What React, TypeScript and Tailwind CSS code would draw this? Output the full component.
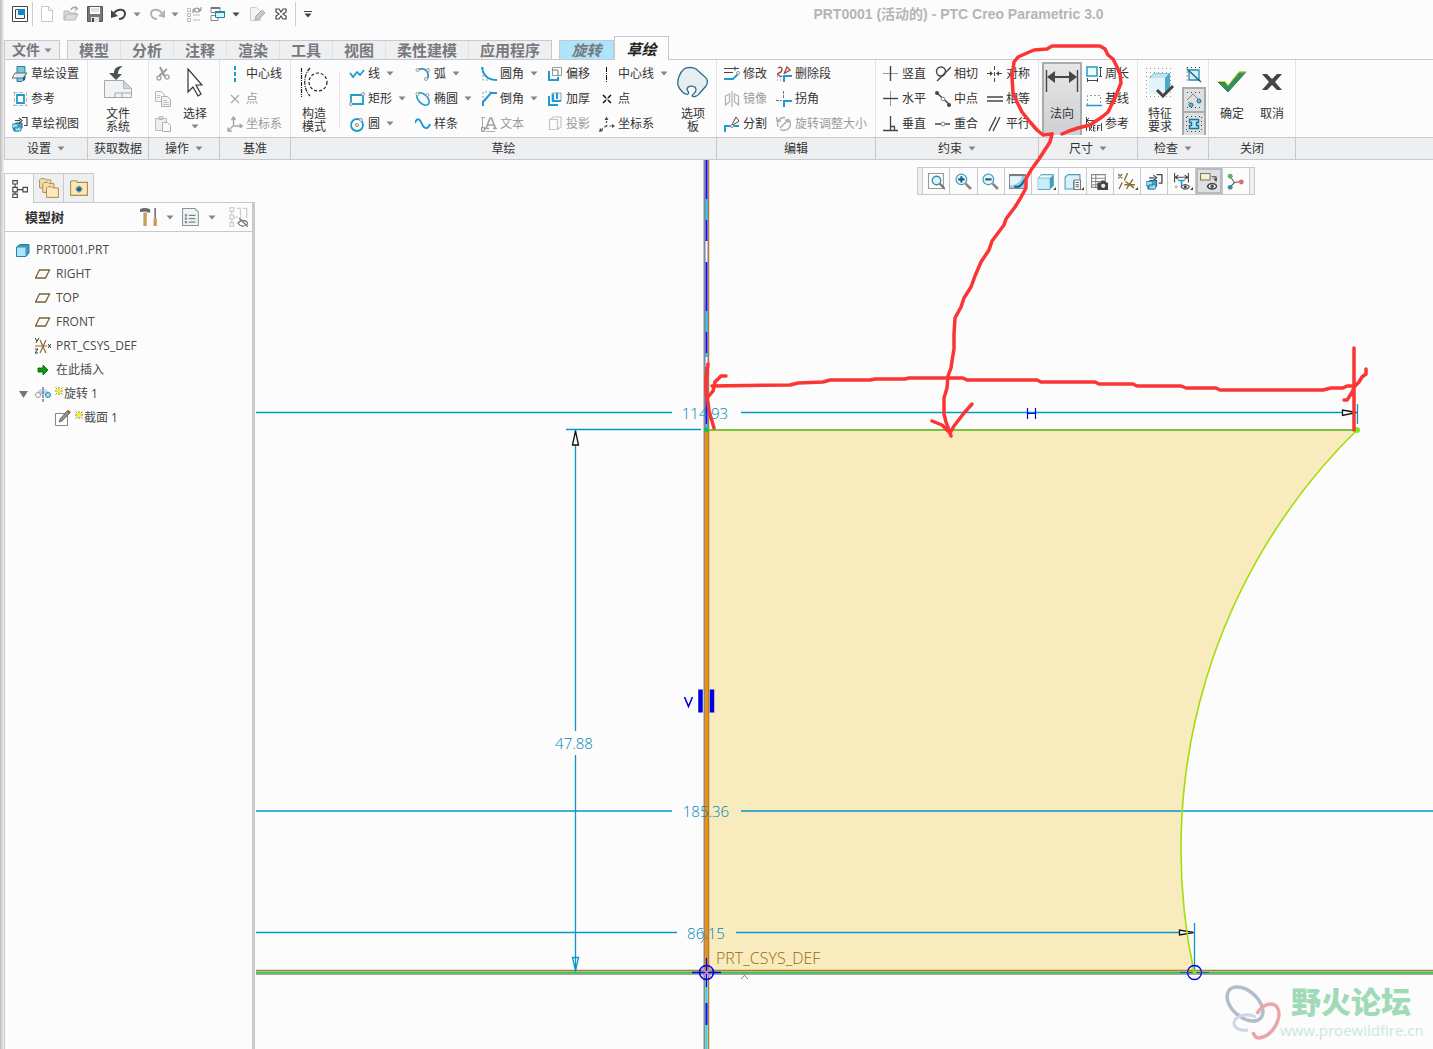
import type { ReactNode } from "react";
import clsx from "clsx";

const DK = "#454545";
const BL = "#1e9bd0";
const GR = "#b4b4b4";

const icons: Record<string, ReactNode> = {
  newFile: <path d="M2.500 .5h7l4 4v11h-11zM9.500 .5v4h4" fill="#fff" stroke="#c8c8c8" />,
  open: (
    <>
      <path d="M1 14V5h5l1 2h6v2M1 14l3-6h11l-3 6z" fill="#ddd" stroke="#b5b5b5" />
      <path d="M8 4c1-3 3-3 5-2M12 .5l2.500 2-2.500 2" fill="none" stroke="#aaa" strokeWidth="1.500" />
    </>
  ),
  save: (
    <>
      <path d="M.5 .5h15v15H.5z" fill="#77787a" stroke="#55575a" />
      <path d="M3 1h10v7H3z" fill="#fff" />
      <path d="M4 3h8M4 5h8" stroke="#c4c4c4" />
      <path d="M4 11h8v5H4z" fill="#d4e4ec" />
      <path d="M5 12h2v4H5z" fill="#444" />
    </>
  ),
  undo: (
    <>
      <path d="M3 7c4-5 11-4 11 1 0 3-3 5-6 5" fill="none" stroke={DK} strokeWidth="2" />
      <path d="M0 4v8l7-2z" fill={DK} />
    </>
  ),
  redo: (
    <>
      <path d="M13 7C9 2 2 3 2 8c0 3 3 5 6 5" fill="none" stroke={GR} strokeWidth="2" />
      <path d="M16 4v8l-7-2z" fill={GR} />
    </>
  ),
  regen: (
    <>
      <path d="M1.500 2.500h3v3h-3zM1.500 7.500h3v3h-3zM1.500 12.500h3v3h-3zM7 9h7M7 14h7" fill="none" stroke="#bbb" />
      <path d="M7 5c0-3 5-4 7-1M15 2c0 4-4 5-7 3M12 4h3V1M7 7V4h3" fill="none" stroke="#999" strokeWidth="1.200" />
    </>
  ),
  windows: (
    <>
      <path d="M1 1.500h9v5H1zM1 9.500h7v5H1z" fill="#fff" stroke="#888" />
      <path d="M1 2h9" stroke="#777" strokeWidth="2" />
      <path d="M5.500 5.500h9v6h-9z" fill="#d8f2fb" stroke="#2186a8" />
      <path d="M5 6h10" stroke="#2186a8" strokeWidth="2" />
    </>
  ),
  erase: (
    <>
      <path d="M1.500 1.500h6l4 4v9h-10z" fill="#f4f4f4" stroke="#ccc" />
      <path d="M7 10l6-6 3 3-6 6-4 1z" fill="#c9c9c9" stroke="#aaa" />
    </>
  ),
  closeWin: <path d="M3 3h3l2 3 2-3h3v3l-3 2 3 2v3h-3l-2-3-2 3H3v-3l3-2-3-2z" fill="#fff" stroke={DK} strokeWidth="1.200" />,
  sketchSetup: (
    <>
      <path d="M5 .5h8v12l-3 3H5z" fill="#7ec6e0" stroke="#2d7f9e" />
      <path d="M3 7h12l-4 5H0z" fill="#e8f6fb" fillOpacity=".85" stroke="#666" />
      <path d="M11 12l2-2v4l-2 1z" fill="#126080" />
    </>
  ),
  refs: (
    <>
      <path d="M5 4h7v8H5z" fill="none" stroke={BL} strokeWidth="1.800" />
      <path d="M2.500 1v14M1 14.500h14M1 1.500h12M14.500 1v13" stroke="#b5b5b5" strokeDasharray="4 2" />
    </>
  ),
  sketchView: (
    <>
      <path d="M1 9l3-2h6v5l-3 3H2z" fill="#42a4cc" stroke="#1c6d8d" />
      <path d="M0 8h6v4H0zM3 11h6v4H3z" fill="#9ddcf0" stroke="#2580a1" strokeWidth=".7" />
      <path d="M3 4.500h5M7 2l3 2.500L7 7M10 1.500h5v8h-3" fill="none" stroke={DK} strokeWidth="1.200" />
    </>
  ),
  cut: (
    <>
      <path d="M5 1l5 10M12 3L4 10" stroke="#999" strokeWidth="2" />
      <circle cx="4" cy="12" r="2" fill="none" stroke="#aaa" strokeWidth="1.500" />
      <circle cx="12" cy="11" r="2" fill="none" stroke="#aaa" strokeWidth="1.500" />
    </>
  ),
  copy: (
    <>
      <path d="M.5 .5h6l3 3v7h-9z" fill="#f5f5f5" stroke="#b9b9b9" />
      <path d="M6.500 5.500h6l3 3v7h-9z" fill="#f5f5f5" stroke="#b0b0b0" />
      <path d="M8 9.500h4M8 11.500h6M8 13.500h6M2 4.500h3M2 6.500h3" stroke="#c2c2c2" />
    </>
  ),
  paste: (
    <>
      <path d="M.5 2.500h11v12H.5zM4 .5h4v3H4z" fill="#eee" stroke="#bbb" />
      <path d="M7.500 6.500h5l3 3v6h-8z" fill="#f8f8f8" stroke="#b0b0b0" />
    </>
  ),
  centerBlue: <path d="M8 0v16" stroke={BL} strokeWidth="2" strokeDasharray="4 2" />,
  center: <path d="M7.500 1v15" stroke="#111" strokeDasharray="5 1 1 1" />,
  pointGray: <path d="M4 4l8 8M12 4l-8 8" stroke="#aaa" strokeWidth="1.200" />,
  point: (
    <>
      <path d="M4 4l3 3M12 4L9 7M4 12l3-3M12 12L9 9" stroke="#111" strokeWidth="1.500" />
      <path d="M7 7h2v2H7z" fill="#aaa" />
    </>
  ),
  csysGray: <path d="M6.500 1v9h9M6 10l-5 5M4.500 4l2-3 2 3M12.500 8l3 2-3 2M1 11.500V15h4" fill="none" stroke="#a6a6a6" strokeWidth="1.400" />,
  csys: (
    <>
      <path d="M7.500 1v9h7M7 10l-6 5" fill="none" stroke={DK} strokeWidth="1.200" strokeDasharray="2 2" />
      <path d="M5.500 4l2-3 2 3zM13 8l3 2-3 2zM0 16l1-4 3 3z" fill={DK} />
    </>
  ),
  line: <path d="M1 7l3 4 4-5 3 3 4-5" fill="none" stroke={BL} strokeWidth="1.800" />,
  rect: (
    <>
      <path d="M2 4h12v9H2z" fill="none" stroke={BL} strokeWidth="1.800" />
      <circle cx="14" cy="3" r="1.500" fill="#fff" stroke="#999" />
      <circle cx="2" cy="13" r="1.500" fill="#fff" stroke="#999" />
    </>
  ),
  circle: (
    <>
      <circle cx="8" cy="9" r="6" fill="none" stroke={BL} strokeWidth="1.800" />
      <circle cx="8" cy="9" r="1.500" fill="#fff" stroke="#888" />
      <circle cx="12" cy="4" r="1.500" fill="#fff" stroke="#999" />
    </>
  ),
  arc: (
    <>
      <path d="M2 4c8-3 12 1 11 8" fill="none" stroke={BL} strokeWidth="1.800" />
      <circle cx="2.500" cy="4" r="1.500" fill="#fff" stroke="#999" />
      <circle cx="13" cy="4" r="1.500" fill="#fff" stroke="#999" />
      <circle cx="11" cy="13" r="1.500" fill="#fff" stroke="#999" />
    </>
  ),
  ellipse: (
    <>
      <ellipse cx="8" cy="8" rx="7.500" ry="4.500" transform="rotate(45 8 8)" fill="none" stroke={BL} strokeWidth="1.600" />
      <circle cx="2.500" cy="3" r="1.500" fill="#fff" stroke="#999" />
      <circle cx="12.500" cy="4" r="1.500" fill="#fff" stroke="#999" />
    </>
  ),
  spline: <path d="M0 7c2-6 5-4 7 1s6 6 8 0" fill="none" stroke={BL} strokeWidth="2" />,
  fillet: (
    <>
      <path d="M2 1v13h7" fill="none" stroke="#999" strokeDasharray="2 2" />
      <path d="M1 1c1 9 6 13 15 13" fill="none" stroke={BL} strokeWidth="2" />
    </>
  ),
  chamfer: (
    <>
      <path d="M2 11V1h9" fill="none" stroke="#999" strokeDasharray="2 2" />
      <path d="M2 15v-4l8-9h6" fill="none" stroke={BL} strokeWidth="2" />
    </>
  ),
  textIcon: (
    <>
      <path d="M1.500 1v10M5 15.500h9M0 1.500h4" stroke="#aaa" />
      <path d="M5 12.500L9 2h1.500l4 10.500M6.500 9h6M4 12.500h4M12 12.500h4" fill="none" stroke="#a2a2a2" strokeWidth="1.700" />
      <path d="M.5 11.500h3v4h-3z" fill="#ddd" stroke="#999" />
    </>
  ),
  offset: (
    <>
      <path d="M5.500 1.500h9v8h-9z" fill="#fff" stroke="#999" />
      <path d="M2 5v9h9v-3" fill="none" stroke={BL} strokeWidth="2" />
      <path d="M5 4h6v6" fill="none" stroke="#777" />
    </>
  ),
  thicken: (
    <>
      <path d="M5 2h9v8H5z" fill="#e9f7fc" stroke="#8aa" />
      <path d="M2 5v9h9M6 3v7h8M10 2v6" fill="none" stroke={BL} strokeWidth="2" />
    </>
  ),
  project: <path d="M2.500 3.500h8v10h-8zM4 3l2-2h8v10l-3 2" fill="none" stroke="#c4c4c4" strokeWidth="1.200" />,
  modify: (
    <>
      <path d="M0 2.500h15M11 .5v4M0 6.500h9" stroke={DK} />
      <path d="M0 13h9l5-5" fill="none" stroke={BL} strokeWidth="1.800" />
      <circle cx="14" cy="7" r="1.500" fill="#fff" stroke="#999" />
    </>
  ),
  mirror: <path d="M8 0v16M1.500 5l4-2v8l-4 3zM14.500 5l-4-2v8l4 3z" fill="none" stroke="#b4b4b4" strokeWidth="1.300" />,
  divide: (
    <>
      <path d="M1 16v-6h6M10 10h5" fill="none" stroke={BL} strokeWidth="2" />
      <path d="M8 9l4-8 3 4-6 4" fill="none" stroke={DK} />
      <circle cx="8" cy="10" r="1.500" fill="#fff" stroke="#888" />
    </>
  ),
  deleteSeg: (
    <>
      <path d="M2 2c5-3 5 4 1 5s2 4 3 3M8 8l3-7 3 3-5 3" fill="none" stroke="#9c4b45" strokeWidth="1.400" />
      <path d="M8 16v-6h8" fill="none" stroke={BL} strokeWidth="2" />
      <path d="M1 11h5M1 14h4" stroke="#777" strokeDasharray="1 2" />
    </>
  ),
  corner: (
    <>
      <path d="M0 9.500h6M7.500 0v8" stroke="#777" strokeDasharray="3 1" />
      <path d="M8 16v-6h8" fill="none" stroke={BL} strokeWidth="2" />
    </>
  ),
  rotateSize: (
    <>
      <circle cx="8" cy="8" r="6.500" fill="none" stroke="#aaa" strokeDasharray="14 3" strokeWidth="1.400" />
      <path d="M4 12l8-8M9 4h3v3M1 1v4h4" fill="none" stroke="#aaa" strokeWidth="1.400" />
    </>
  ),
  vertical: (
    <>
      <path d="M0 7.500h15" stroke="#999" />
      <path d="M7.500 0v15" stroke={DK} strokeWidth="1.400" />
    </>
  ),
  horizontal: (
    <>
      <path d="M7.500 0v15" stroke="#999" />
      <path d="M0 7.500h15" stroke={DK} strokeWidth="1.400" />
    </>
  ),
  perp: <path d="M0 14.500h15M7.500 0v14M8 10.500h3.500V14" fill="none" stroke={DK} strokeWidth="1.300" />,
  tangent: (
    <>
      <circle cx="6" cy="5.500" r="4.500" fill="none" stroke={DK} strokeWidth="1.400" />
      <path d="M2 15L16 1" stroke={DK} strokeWidth="1.400" />
    </>
  ),
  midpoint: (
    <>
      <path d="M2 2l13 12" stroke={DK} strokeWidth="1.500" />
      <circle cx="2" cy="2" r="2" fill={DK} />
      <circle cx="14" cy="14" r="2" fill={DK} />
      <circle cx="8" cy="8" r="1.800" fill="#fff" stroke="#888" />
    </>
  ),
  coincident: (
    <>
      <path d="M0 8h15" stroke={DK} strokeWidth="1.500" />
      <circle cx="8" cy="8" r="2" fill="#fff" stroke="#888" />
    </>
  ),
  symmetric: (
    <>
      <path d="M7.500 0v16" stroke={DK} strokeDasharray="4 2" />
      <path d="M0 7.500h5M10 7.500h5" stroke={DK} />
      <path d="M3 5l3 2.500L3 10zM12 5L9 7.500l3 2.500z" fill={DK} />
    </>
  ),
  equal: <path d="M0 6h16M0 10h16" stroke={DK} strokeWidth="1.500" />,
  parallel: <path d="M2 15L9 1M6 15l7-14" stroke={DK} strokeWidth="1.400" />,
  perimeter: (
    <>
      <path d="M1 1h10v9H1z" fill="#f3fbfe" stroke={BL} strokeWidth="1.500" />
      <path d="M14.500 1v10M13 1.500h3M13 10.500h3M1 14.500h10M1.500 12v4M11.500 12v4" stroke={DK} />
    </>
  ),
  baseline: (
    <>
      <path d="M1.500 14V4.500h13V14" fill="none" stroke="#999" strokeDasharray="2 2" />
      <path d="M0 14.500h16" stroke={BL} strokeWidth="1.500" />
    </>
  ),
  refDim: <path d="M.5 1v14M15.500 7v8M0 4.500h10M3 2L.5 4.500 3 7M3.500 15V9.500h2v2.500h-2l2.500 3M9.500 9.500h-2V15h2M7.500 12h2M11.500 15V9.500h3M11.500 12h2" fill="none" stroke={DK} />,
  overlap: (
    <>
      <path d="M3 3h10v10H3z" fill="#d9eff7" stroke="#2b88aa" strokeWidth="1.300" />
      <path d="M1 .5h14M1 .5v14" stroke={DK} strokeDasharray="1 3" />
      <path d="M1 2l14 13" stroke="#126a8c" strokeWidth="1.500" />
    </>
  ),
  openEnds: (
    <>
      <path d="M1 8l6-6 6 6M2 10l5 4" fill="none" stroke="#888" />
      <path d="M1 .5h14M1 15.500h14" stroke={DK} strokeDasharray="1 3" />
      <circle cx="13" cy="9" r="2" fill="#5cc0e6" stroke="#1b7396" />
      <circle cx="5" cy="13" r="2" fill="#5cc0e6" stroke="#1b7396" />
    </>
  ),
  shade: (
    <>
      <path d="M1 .5h15M.5 1v15M1 15.500h15M15.500 1v15" stroke={DK} strokeDasharray="1 3" />
      <path d="M3.500 3.500h9v3h-2v3h2v3h-9v-3h2v-3h-2z" fill="#b9e6f5" stroke="#1b7396" strokeWidth="1.400" />
    </>
  ),
  zoomFit: (
    <>
      <path d="M.5 .5h14v14H.5z" fill="#fff" stroke="#999" />
      <circle cx="8" cy="7" r="4" fill="#dff2f9" stroke="#3a8bab" strokeWidth="1.300" />
      <path d="M11 10l5 5" stroke="#777" strokeWidth="2" />
    </>
  ),
  zoomIn: (
    <>
      <circle cx="6" cy="6" r="5" fill="#e6f6fb" stroke="#4b9cba" strokeWidth="1.200" />
      <path d="M10 10l5 5" stroke="#888" strokeWidth="2.500" />
      <path d="M3 6h6M6 3v6" stroke="#136284" strokeWidth="2" />
    </>
  ),
  zoomOut: (
    <>
      <circle cx="6" cy="6" r="5" fill="#e6f6fb" stroke="#4b9cba" strokeWidth="1.200" />
      <path d="M10 10l5 5" stroke="#888" strokeWidth="2.500" />
      <path d="M3 6h6" stroke="#136284" strokeWidth="2" />
    </>
  ),
  repaint: (
    <>
      <path d="M.5 1.500h15v13H.5z" fill="#93cde2" stroke="#888" />
      <path d="M1 3h11c0 5-5 8-11 9z" fill="#e3f5fb" />
      <path d="M1 2h14" stroke="#666" />
      <path d="M5 13h4c3-1 4-4 6-7" fill="none" stroke="#146080" strokeWidth="1.800" />
    </>
  ),
  cube: (
    <>
      <path d="M1 5l3-3.500h11.500V12L12 15.500H1z" fill="#3f9fc4" stroke="#4f9cb8" strokeWidth=".7" />
      <path d="M1 5h11v10H1z" fill="#c9ecf7" />
      <path d="M1.500 4.500L4 2h11l-2.500 2.500z" fill="#effafd" />
    </>
  ),
  savedView: (
    <>
      <path d="M1 4l3-2.500h11V8H9v7H1z" fill="#d9f1f9" stroke="#4f9cb8" />
      <path d="M9.500 6.500h6v9h-6z" fill="#fff" stroke="#777" />
      <path d="M11 9h3M11 11h3M11 13h3" stroke="#555" />
    </>
  ),
  viewMgr: (
    <>
      <path d="M.5 1.500h13v12H.5zM1 5h12M1 8h12M1 11h12M4.500 2v12" fill="#fff" stroke="#888" />
      <path d="M6 9h3l1-2h3l1 2h2v7H6z" fill={DK} />
      <circle cx="11.500" cy="12" r="2" fill="#eee" />
    </>
  ),
  datum: (
    <path d="M0 1l4 4M4 1L0 5M9 0L6 7M4 9l-3 6M8 15l6-9M7 8l8 6M6 11h10" stroke="#8a6c33" strokeWidth="1.300" />
  ),
  dimDisplay: (
    <>
      <path d="M1.500 0v9M14.500 0v9M2 4h12M5 2L2 4l3 2M11 2l3 2-3 2" fill="none" stroke={DK} />
      <path d="M5 7h6M8 7v5" stroke={BL} strokeWidth="1.500" />
      <circle cx="3" cy="13" r="1.500" fill="#bbb" />
      <path d="M7.500 13c2-3 6-3 8 0-2 3-6 3-8 0z" fill="#fff" stroke={DK} />
      <circle cx="11.500" cy="13" r="1.500" fill={DK} />
    </>
  ),
  annot: (
    <>
      <path d="M.5 .5h9v6h-9z" fill="#fcefc8" stroke="#777" />
      <path d="M11 3.500h4v3M13 5l2 2.500 1-2.500" fill="none" stroke={DK} />
      <path d="M7 12.500c2-3.500 7-3.500 9 0-2 3.500-7 3.500-9 0z" fill="#fff" stroke={DK} strokeWidth="1.400" />
      <circle cx="11.500" cy="12.500" r="1.600" fill={DK} />
    </>
  ),
  spin: (
    <>
      <path d="M3 3l4 6-4 4M7 9l6-1" fill="none" stroke="#555" />
      <circle cx="3" cy="3" r="2.300" fill="#6cab67" />
      <circle cx="3" cy="13.500" r="2.300" fill="#4287a8" />
      <circle cx="13.500" cy="8.500" r="2.300" fill="#d96f6a" />
    </>
  ),
  tree: (
    <path d="M2.500 .5h4v3h-4zM2.500 6.500h4v4h-4zM2.500 12.500h4v3h-4zM11.500 6.500h4v4h-4zM4.500 4v2.500M4.500 10.500v2M6.500 8.500h5" fill="none" stroke={DK} />
  ),
  treeHidden: (
    <>
      <path d="M1.500 .5h3v3h-3zM1.500 6.500h3v3h-3zM1.500 12.500h3v3h-3zM3 4v2.500M3 10v2.500M5 8h3M7 1h3v10M12 1h3v8" fill="none" stroke="#cfcfcf" />
      <path d="M8 13c2-3 6-3 8 0-2 3-6 3-8 0zM9 9l7 7" fill="none" stroke="#777" />
    </>
  ),
  folders: (
    <>
      <path d="M.5 8V1.500l1-1h3l1 1h4V8z" fill="#f6dfae" stroke="#b18d4b" strokeWidth=".8" />
      <path d="M3 11.500V4.500l1-1h3l1 1h4v7z" fill="#f6dfae" stroke="#b18d4b" strokeWidth=".8" />
      <path d="M6 15.500V8l1-1h3l1 1h4.500v7.500z" fill="#fbe9c0" stroke="#b18d4b" strokeWidth=".8" />
    </>
  ),
  favFolder: (
    <>
      <path d="M.5 14.500V2.500l1-1h4l1 1.500h9v11.500z" fill="#fbe6ba" stroke="#b18d4b" />
      <path d="M8 6v6M5 9h6M6 7l4 4M10 7l-4 4" stroke="#126284" />
    </>
  ),
  tools: (
    <>
      <path d="M0 1c3-1.500 6-1 9 0v3H6V3L0 3.500z" fill="#666973" />
      <path d="M3 4h3v12H3z" fill="#c99d58" />
      <path d="M12 9h3v7h-3z" fill="#c99d58" />
      <path d="M13.500 0v9" stroke="#777" strokeWidth="1.500" />
    </>
  ),
  doc: (
    <>
      <path d="M.5 .5h11l3 3v12H.5z" fill="#eef3f5" stroke="#8b9094" strokeWidth=".9" />
      <path d="M6 6.500h6M6 9.500h6M6 12.500h6" stroke="#555" strokeWidth=".8" />
      <path d="M2.500 5.500h2v2h-2zM2.500 8.500h2v2h-2zM2.500 11.500h2v2h-2z" fill="#888" />
    </>
  ),
  part: (
    <>
      <path d="M1.500 5L5 2.500h9V11l-3 3.500H1.500z" fill="#3999be" stroke="#2f7f9f" />
      <path d="M2 5.500h8.500v8.500H2z" fill="#a9e6fb" />
    </>
  ),
  plane: <path d="M4.500 4h10l-4 8h-10z" fill="none" stroke="#7a6235" strokeWidth="1.300" />,
  treeCsys: (
    <>
      <path d="M0 8h12M5 2l6 13M11 2L5 15" stroke="#8a6c33" strokeWidth="1.200" />
      <path d="M0 0l2 3M4 0L1 5M13 6l3 4M16 6l-3 4M0 11h3l-3 4h3" fill="none" stroke="#333" />
    </>
  ),
  insert: <path d="M3 6h5V3l5 5-5 5v-3H3z" fill="#0a9a0a" stroke="#045d04" strokeWidth=".8" />,
  revolve: (
    <>
      <path d="M2 6c3-4 9-4 12 0v3H2z" fill="#b9d9e6" />
      <circle cx="3" cy="9" r="2.500" fill="#fff" stroke="#999" />
      <circle cx="13" cy="9" r="2.500" fill="#9de0f7" stroke="#2587aa" />
      <path d="M8 1v15" stroke="#444" strokeDasharray="3 1" />
    </>
  ),
  section: (
    <>
      <path d="M.5 3.500h12v12H.5z" fill="#fff" stroke="#888" />
      <path d="M4 12l1-3 7-8 3 2-8 8z" fill="#8d9094" stroke="#555" strokeWidth=".7" />
      <path d="M12 1l1-1 3 2-1 1z" fill="#c9302c" />
    </>
  ),
};

const Icon = ({ name, size = "size-4" }: { name: string; size?: string }) => (
  <svg viewBox="0 0 16 16" className={clsx("shrink-0", size)} aria-hidden="true">
    {icons[name]}
  </svg>
);

const Caret = ({ dark = false }: { dark?: boolean }) => (
  <svg viewBox="0 0 8 5" className="h-[5px] w-2 shrink-0" aria-hidden="true">
    <path d="M.5 .5h7L4 4.500z" fill={dark ? "#444" : "#858585"} />
  </svg>
);

type Cmd = { icon: string; label: string; caret?: boolean; off?: boolean };

const Column = ({ items, className }: { items: Cmd[]; className?: string }) => (
  <div className={clsx("flex shrink-0 flex-col pt-px", className)}>
    {items.map((it) => (
      <button
        key={it.label}
        disabled={it.off}
        className={clsx("flex h-[25px] items-center whitespace-nowrap", it.off ? "text-[#9b9b9b]" : "text-[#333]")}
      >
        <Icon name={it.icon} />
        <span className="ml-[3px]">{it.label}</span>
        {it.caret && (
          <span className="ml-1.5 flex">
            <Caret />
          </span>
        )}
      </button>
    ))}
  </div>
);

const BigButton = ({
  lines,
  className,
  caret,
  pressed,
  children,
}: {
  lines: string[];
  className?: string;
  caret?: boolean;
  pressed?: boolean;
  children: ReactNode;
}) => (
  <button
    className={clsx(
      "flex shrink-0 flex-col items-center",
      pressed
        ? "mt-0.5 h-[73px] border-2 border-b-0 border-[#a9abad] bg-linear-to-b from-[#e6e6e8] to-[#cfd0d3]"
        : "pt-1",
      className
    )}
  >
    <span className="flex h-9 items-center">{children}</span>
    <span className="mt-[7px] flex flex-col items-center leading-[13px]">
      {lines.map((l) => (
        <span key={l}>{l}</span>
      ))}
    </span>
    {caret && (
      <span className="mt-1">
        <Caret />
      </span>
    )}
  </button>
);

const Group = ({
  title,
  caret,
  className,
  children,
}: {
  title: string;
  caret?: boolean;
  className: string;
  children: ReactNode;
}) => (
  <section className={clsx("flex shrink-0 flex-col", className)}>
    <div className="flex h-[77px] border-r border-[#e2e4e6]">{children}</div>
    <h2 className="flex h-[22px] items-center justify-center gap-1.5 border-t border-r border-[#c6c9cd] bg-[#eeeff1]">
      {title}
      {caret && <Caret />}
    </h2>
  </section>
);

const tabs = ["模型", "分析", "注释", "渲染", "工具", "视图", "柔性建模", "应用程序"];

const TitleBar = () => (
  <header className="flex h-9 items-center pb-2">
    <div className="flex items-center pl-2">
      <svg viewBox="0 0 16 16" className="size-4" aria-hidden="true">
        <path d="M.5 .5h15v15H.5z" fill="#fff" stroke="#444" />
        <path d="M3.500 3.500h9v9h-9z" fill="#eef7fb" stroke="#444" />
        <path d="M6 3h7v6H6z" fill="#1487c8" />
      </svg>
      <span className="ml-1 h-6 w-px bg-[#ccced0]" />
      <div className="ml-1.5 flex items-center">
        <button aria-label="新建" className="flex w-6"><Icon name="newFile" /></button>
        <button aria-label="打开" className="flex w-6"><Icon name="open" /></button>
        <button aria-label="保存" className="flex w-6"><Icon name="save" /></button>
        <button aria-label="撤消" className="flex w-[38px] items-center gap-1.5"><Icon name="undo" /><Caret /></button>
        <button aria-label="重做" className="flex w-[37px] items-center gap-1.5"><Icon name="redo" /><Caret /></button>
        <button aria-label="重新生成" className="flex w-6"><Icon name="regen" /></button>
        <button aria-label="窗口" className="flex w-[39px] items-center gap-1.5"><Icon name="windows" /><Caret dark /></button>
        <button aria-label="拭除" className="flex w-6"><Icon name="erase" /></button>
        <button aria-label="关闭窗口" className="flex w-[22px]"><Icon name="closeWin" /></button>
      </div>
      <span className="h-6 w-px bg-[#ccced0]" />
      <button aria-label="自定义" className="ml-2 flex flex-col items-center gap-px">
        <span className="h-px w-2 bg-[#444]" />
        <Caret dark />
      </button>
    </div>
    <h1 className="flex-1 pl-[172px] text-center font-['Liberation_Sans','Noto_Sans_CJK_SC',sans-serif] text-sm leading-4 font-bold text-[#b5b5b5]">
      PRT0001 (活动的) - PTC Creo Parametric 3.0
    </h1>
  </header>
);

const TabBar = () => (
  <nav className="flex h-6 items-end border-b border-[#c6c9cd] text-[15px] leading-4 font-bold text-[#77797c]">
    <button className="-mb-px flex h-5 w-14 items-center justify-center gap-1 border border-[#c6c9cd] bg-[#eeeff1] text-sm leading-4">
      文件
      <Caret />
    </button>
    <div className="-mb-px ml-[7px] flex h-5 border border-[#c6c9cd] bg-[#eeeff1]">
      {tabs.map((t) => (
        <button key={t} className="border-r border-[#e0e2e4] px-[11px] last:border-r-0">
          {t}
        </button>
      ))}
    </div>
    <button className="-mb-px ml-[7px] h-5 w-[55px] border border-[#c6c9cd] bg-[#aee5fd] italic">旋转</button>
    <button className="-mb-px h-6 w-[55px] border border-b-0 border-[#c6c9cd] bg-[#fcfcfc] text-[#222] italic">草绘</button>
  </nav>
);

const Ribbon = () => (
  <div className="flex border-b border-l border-[#c6c9cd] text-xs leading-4 text-[#333]">
    <Group title="设置" caret className="w-[83px]">
      <Column
        className="pl-[7px]"
        items={[
          { icon: "sketchSetup", label: "草绘设置" },
          { icon: "refs", label: "参考" },
          { icon: "sketchView", label: "草绘视图" },
        ]}
      />
    </Group>
    <Group title="获取数据" className="w-[61px]">
      <BigButton lines={["文件", "系统"]} className="w-[60px]">
        <svg viewBox="0 0 28 32" className="h-8 w-7">
          <path d="M.5 14.500h19l8 8v9H.5z" fill="#f0f2f3" stroke="#a5a7aa" />
          <path d="M19.500 14.500v8h8z" fill="#c6d8e2" stroke="#a5a7aa" strokeWidth=".7" />
          <path d="M11 31v-4h16M18 27v4" fill="none" stroke="#a5a7aa" />
          <path d="M19 0c-7 0-9 3-9 7H5l7 7 6-6h-4c0-3 1-5 5-8z" fill="#4c5357" />
        </svg>
      </BigButton>
    </Group>
    <Group title="操作" caret className="w-[71px]">
      <div className="flex flex-col pt-px pl-1.5">
        <button aria-label="剪切" className="flex h-[25px] items-center"><Icon name="cut" /></button>
        <button aria-label="复制" className="flex h-[25px] items-center"><Icon name="copy" /></button>
        <button aria-label="粘贴" className="flex h-[25px] items-center"><Icon name="paste" /></button>
      </div>
      <BigButton lines={["选择"]} caret className="ml-2 w-8">
        <svg viewBox="0 0 16 29" className="h-[29px] w-4">
          <path d="M1 1v23l5-5 5 9 3-2-5-9h6z" fill="#fff" stroke="#333" strokeWidth="1.200" />
        </svg>
      </BigButton>
    </Group>
    <Group title="基准" className="w-[71px]">
      <Column
        className="pl-[7px]"
        items={[
          { icon: "centerBlue", label: "中心线" },
          { icon: "pointGray", label: "点", off: true },
          { icon: "csysGray", label: "坐标系", off: true },
        ]}
      />
    </Group>
    <Group title="草绘" className="w-[426px]">
      <BigButton lines={["构造", "模式"]} className="w-[46px]">
        <svg viewBox="0 0 28 32" className="h-8 w-7" fill="none" stroke="#222" strokeWidth="1.200">
          <path d="M1.500 2v29M10 2C3 9 3 23 10 30" strokeDasharray="4 1 1 1" />
          <circle cx="18" cy="16" r="9" strokeDasharray="3 2" />
        </svg>
      </BigButton>
      <span className="mt-3 ml-0.5 h-14 w-px bg-[#e4e6e8]" />
      <Column
        className="ml-[9px] w-[66px]"
        items={[
          { icon: "line", label: "线", caret: true },
          { icon: "rect", label: "矩形", caret: true },
          { icon: "circle", label: "圆", caret: true },
        ]}
      />
      <Column
        className="w-[66px]"
        items={[
          { icon: "arc", label: "弧", caret: true },
          { icon: "ellipse", label: "椭圆", caret: true },
          { icon: "spline", label: "样条" },
        ]}
      />
      <Column
        className="w-[66px]"
        items={[
          { icon: "fillet", label: "圆角", caret: true },
          { icon: "chamfer", label: "倒角", caret: true },
          { icon: "textIcon", label: "文本", off: true },
        ]}
      />
      <Column
        className="w-[52px]"
        items={[
          { icon: "offset", label: "偏移" },
          { icon: "thicken", label: "加厚" },
          { icon: "project", label: "投影", off: true },
        ]}
      />
      <Column
        className="w-[74px]"
        items={[
          { icon: "center", label: "中心线", caret: true },
          { icon: "point", label: "点" },
          { icon: "csys", label: "坐标系" },
        ]}
      />
      <BigButton lines={["选项", "板"]} className="w-10">
        <svg viewBox="0 0 32 32" className="size-8">
          <path
            d="M7 3c3-2 9-2 12 0l9 8c3 2 3 6 1 9l-7 8c-2 3-6 3-7 2 0-2 4-3 4-6 0-5-8-5-9-1 0 2 3 3 1 5-3 2-9-5-10-9-1-5 2-13 6-16z"
            fill="#e6eef2"
            stroke="#2c6e88"
            strokeWidth="1.300"
          />
        </svg>
      </BigButton>
    </Group>
    <Group title="编辑" className="w-[159px]">
      <Column
        className="w-[59px] pl-[7px]"
        items={[
          { icon: "modify", label: "修改" },
          { icon: "mirror", label: "镜像", off: true },
          { icon: "divide", label: "分割" },
        ]}
      />
      <Column
        items={[
          { icon: "deleteSeg", label: "删除段" },
          { icon: "corner", label: "拐角" },
          { icon: "rotateSize", label: "旋转调整大小", off: true },
        ]}
      />
    </Group>
    <Group title="约束" caret className="w-[163px]">
      <Column
        className="w-[59px] pl-[7px]"
        items={[
          { icon: "vertical", label: "竖直" },
          { icon: "horizontal", label: "水平" },
          { icon: "perp", label: "垂直" },
        ]}
      />
      <Column
        className="w-[52px]"
        items={[
          { icon: "tangent", label: "相切" },
          { icon: "midpoint", label: "中点" },
          { icon: "coincident", label: "重合" },
        ]}
      />
      <Column
        items={[
          { icon: "symmetric", label: "对称" },
          { icon: "equal", label: "相等" },
          { icon: "parallel", label: "平行" },
        ]}
      />
    </Group>
    <Group title="尺寸" caret className="w-[99px]">
      <BigButton lines={["法向"]} pressed className="ml-[3px] w-10">
        <svg viewBox="0 0 34 24" className="-mt-1 h-6 w-[34px]">
          <path d="M1.500 2v22M32.500 2v22" stroke={DK} strokeWidth="1.400" />
          <path d="M6 9h22" stroke={DK} strokeWidth="2" />
          <path d="M2 9l8-6v12zM32 9l-8-6v12z" fill={DK} />
        </svg>
      </BigButton>
      <Column
        className="ml-1"
        items={[
          { icon: "perimeter", label: "周长" },
          { icon: "baseline", label: "基线" },
          { icon: "refDim", label: "参考" },
        ]}
      />
    </Group>
    <Group title="检查" caret className="w-[71px]">
      <BigButton lines={["特征", "要求"]} className="w-11">
        <svg viewBox="0 0 30 32" className="h-8 w-[30px]">
          <path
            d="M1 2.500h28M1 6.500h28M1 10.500h28M1 14.500h28M1 18.500h28M1 22.500h28M1 26.500h28M1 30.500h28"
            stroke="#999"
            strokeDasharray="1 3"
          />
          <path d="M4 12l5-5h16v16l-5 5H4z" fill="#4ba9cd" />
          <path d="M4 12h16v16H4z" fill="#e2f4fa" />
          <path d="M5 12l4-4.500h15L20 12z" fill="#bfe4f1" />
          <path d="M12 24l6 6 10-10" fill="none" stroke={DK} strokeWidth="3" />
        </svg>
      </BigButton>
      <div className="flex w-6 flex-col pt-0.5">
        <button aria-label="重叠几何" className="flex h-[25px] items-center justify-center"><Icon name="overlap" /></button>
        <button aria-label="突出显示开放端" className="flex h-6 items-center justify-center border-2 border-b-0 border-[#a9abad] bg-[#dedfe1]">
          <Icon name="openEnds" />
        </button>
        <button aria-label="着色封闭环" className="flex h-6 items-center justify-center border-2 border-b-0 border-[#a9abad] bg-[#dedfe1]">
          <Icon name="shade" />
        </button>
      </div>
    </Group>
    <Group title="关闭" className="w-[87px]">
      <BigButton lines={["确定"]} className="ml-[3px] w-10">
        <svg viewBox="0 0 30 24" className="h-6 w-[30px]">
          <path d="M1 12h7l3 4L22 2h7L11 22z" fill="#2f9260" stroke="#1d5c3c" strokeWidth=".7" />
          <path d="M1 11.500h7l3 4L22 2h7" fill="none" stroke="#d4e600" />
        </svg>
      </BigButton>
      <BigButton lines={["取消"]} className="w-10">
        <svg viewBox="0 0 20 18" className="h-[18px] w-5">
          <path d="M0 1h5l5 5 5-5h5l-7 8 7 8h-5l-5-5-5 5H0l7-8z" fill={DK} />
        </svg>
      </BigButton>
    </Group>
    <div className="flex flex-1 flex-col">
      <div className="h-[77px]" />
      <div className="h-[22px] border-t border-[#c6c9cd] bg-[#eeeff1]" />
    </div>
  </div>
);

const treeItems = [
  { icon: "plane", label: "RIGHT" },
  { icon: "plane", label: "TOP" },
  { icon: "plane", label: "FRONT" },
  { icon: "treeCsys", label: "PRT_CSYS_DEF" },
  { icon: "insert", label: "在此插入" },
];

const Star = () => (
  <svg viewBox="0 0 8 8" className="mb-1.5 size-2 shrink-0" aria-hidden="true">
    <path d="M.5 .5l7 7M7.500 .5l-7 7M4 0v8M0 4h8" stroke="#6b6b20" strokeWidth=".8" />
    <path d="M2 2h4v4H2z" fill="#fff200" />
  </svg>
);

const ModelTree = () => (
  <aside className="flex w-[251px] shrink-0 flex-col pt-[13px] text-xs leading-4 text-[#4a4a4a]">
    <div className="z-10 -mb-px flex h-[30px]">
      <button aria-label="模型树" className="flex w-[30px] items-center justify-center border border-b-0 border-[#c6c9cd] bg-[#fcfcfc]">
        <Icon name="tree" size="size-[18px]" />
      </button>
      <button aria-label="文件夹浏览器" className="flex w-[30px] items-center justify-center border border-l-0 border-[#c6c9cd] bg-[#eeeff1]">
        <Icon name="folders" size="size-5" />
      </button>
      <button aria-label="收藏夹" className="flex w-[30px] items-center justify-center border border-l-0 border-[#c6c9cd] bg-[#eeeff1]">
        <Icon name="favFolder" size="size-[18px]" />
      </button>
    </div>
    <div className="flex-1 border-t border-r-[3px] border-l border-[#c6c9cd]">
      <div className="flex h-[29px] items-center border-b border-[#c6c9cd] pr-1 pl-5">
        <h2 className="flex-1 text-[13px] font-bold text-[#333]">模型树</h2>
        <button aria-label="设置" className="flex items-center gap-2"><Icon name="tools" size="size-[18px]" /><Caret /></button>
        <button aria-label="显示" className="ml-2 flex items-center gap-2"><Icon name="doc" size="size-[18px]" /><Caret /></button>
        <button aria-label="隐藏" className="ml-3"><Icon name="treeHidden" size="size-5" /></button>
      </div>
      <ul className="pt-1.5">
        <li className="flex h-6 items-center gap-[5px] pl-2.5"><Icon name="part" />PRT0001.PRT</li>
        {treeItems.map((it) => (
          <li key={it.label} className="flex h-6 items-center gap-[5px] pl-[30px]">
            <Icon name={it.icon} />
            {it.label}
          </li>
        ))}
        <li className="flex h-6 items-center pl-3.5">
          <svg viewBox="0 0 9 7" className="mr-[7px] h-[7px] w-[9px]"><path d="M0 0h9L4.500 7z" fill="#777" /></svg>
          <Icon name="revolve" />
          <span className="ml-1 flex items-center gap-px"><Star />旋转 1</span>
        </li>
        <li className="flex h-6 items-center pl-[50px]">
          <Icon name="section" />
          <span className="ml-1 flex items-center gap-px"><Star />截面 1</span>
        </li>
      </ul>
    </div>
  </aside>
);

const viewTools = [
  { icon: "zoomFit", label: "重新调整" },
  { icon: "zoomIn", label: "放大" },
  { icon: "zoomOut", label: "缩小" },
  { icon: "repaint", label: "重画" },
  { icon: "cube", label: "显示样式", more: true },
  { icon: "savedView", label: "已保存方向", more: true },
  { icon: "viewMgr", label: "视图管理器" },
  { icon: "datum", label: "基准显示过滤器", more: true },
  { icon: "sketchView", label: "草绘视图" },
  { icon: "dimDisplay", label: "草绘器显示过滤器", more: true },
  { icon: "annot", label: "注释显示", on: true },
  { icon: "spin", label: "旋转中心" },
];

const ViewToolbar = () => (
  <div className="absolute top-[7px] left-[662px] flex h-7 w-[338px] border border-[#c6c9cd] bg-[#eeeff1] px-1">
    {viewTools.map((t) => (
      <button
        key={t.icon}
        aria-label={t.label}
        className={clsx(
          "relative flex flex-1 items-center justify-center border-l border-[#c6c9cd] last:border-r",
          t.on ? "bg-[#dedfe1] inset-ring-2 inset-ring-[#b8babd]" : "bg-[#fcfcfc]"
        )}
      >
        <Icon name={t.icon} size="size-[17px]" />
        {t.more && (
          <svg viewBox="0 0 4 4" className="absolute right-0.5 bottom-1 size-[3px]"><path d="M4 0v4H0z" fill="#444" /></svg>
        )}
      </button>
    ))}
  </div>
);

// sketch geometry, in screen units
const Sketch = () => (
  <svg
    viewBox="255 160 1178 889"
    preserveAspectRatio="xMinYMin slice"
    className="absolute inset-0 h-full w-full font-['Open_Sans',sans-serif]"
  >
    <path d="M708 430H1357A587 587 0 0 0 1194 972H708z" fill="#f8ebbd" />

    <path d="M704.500 160V1049" stroke="#8a8a8a" strokeWidth="2" />
    <path d="M708.500 160V1049" stroke="#b07a35" strokeWidth="1.500" />
    <path d="M706.500 160V430" stroke="#0a0aff" strokeWidth="2" />
    <path d="M706.500 199v21M706.500 311v21M706.500 353v4M706.500 424v6" stroke="#35d6d6" strokeWidth="2" />
    <path d="M706.500 241v21M706.500 357v10" stroke="#fff" strokeWidth="2" />
    <path d="M706.500 430V972" stroke="#f09010" strokeWidth="3" />
    <path d="M706.500 980V1049" stroke="#35d6d6" strokeWidth="2" />
    <path d="M706.500 1003v22" stroke="#0a0aff" strokeWidth="2" />

    <path d="M256 970.500H1433" stroke="#b07a35" strokeWidth="1.500" />
    <path d="M256 974H1433" stroke="#8a8a8a" strokeWidth="1.500" />
    <path d="M256 972.500H1433" stroke="#35c94b" strokeWidth="2" />

    <g stroke="#0a96c8" strokeWidth="1.300" fill="none">
      <path d="M256 412.500H672M741 412.500H1344M1357.500 404v20" />
      <path d="M566 429.500H701M575.500 430V731M575.500 755V972" />
      <path d="M256 811H672M741 811H1433" />
      <path d="M256 932.500H677M736 932.500H1180M1194.500 923v49" />
      <path d="M572.500 957.500h6l-3 13z" />
    </g>
    <g stroke="#111" strokeWidth="1.300" fill="#fcfcfc">
      <path d="M572.500 445l3-14 3 14z" />
      <path d="M1342.500 410v5.500l14-3z" />
      <path d="M1179.500 930v5l14-2.500z" />
    </g>

    <path d="M708 430H1357" stroke="#7cc23c" strokeWidth="2" />
    <path d="M1357 430A587 587 0 0 0 1194 972" fill="none" stroke="#a5dc0c" strokeWidth="1.600" />
    <circle cx="706.500" cy="430" r="2.500" fill="#1fc04a" />
    <circle cx="1357" cy="430" r="3" fill="#7ee81c" />

    <g stroke="#0000e6" fill="none">
      <path d="M1027.500 408v11M1035.500 408v11M1027.500 413.500h8" strokeWidth="1.200" />
      <path d="M684.500 697l4 9.500 4-9.500" strokeWidth="1.600" />
      <path d="M700.500 689.500v23M712 689.500v23" strokeWidth="4.500" />
      <circle cx="706.500" cy="972.500" r="7" strokeWidth="1.600" />
      <path d="M692 972.500h29M706.500 958v29" strokeWidth="1.300" />
      <circle cx="1194.500" cy="972.500" r="7" strokeWidth="1.300" />
      <path d="M1180 972.500h29" stroke="#1c5a9a" />
    </g>
    <path d="M702 968l9 9M711 968l-9 9" stroke="#cf8fe0" strokeWidth="1.500" />
    <circle cx="1194.500" cy="972" r="2" fill="#7ee81c" />
    <path d="M741 972l7 7M748 972l-7 7M701 930l5 6-5 7" stroke="#888" fill="none" />

    <g fill="#0086b8" fontSize="15" fontWeight="300" textAnchor="middle">
      <text x="705" y="419">114.93</text>
      <text x="574" y="749">47.88</text>
      <text x="706" y="817">185.36</text>
      <text x="706" y="939">86.15</text>
    </g>
    <text x="716" y="964" fill="#9a6810" fontSize="16" fontWeight="300">PRT_CSYS_DEF</text>

    <g fill="none">
      <ellipse cx="1245" cy="1004" rx="21" ry="13" transform="rotate(42 1245 1004)" stroke="#b0becb" strokeWidth="3.500" />
      <path d="M1256 1017c-10-5-22 0-22 6s8 8 14 7" stroke="#cfd8e2" strokeWidth="3" />
      <path d="M1257 1014c4-9 15-13 20-7 6 9-3 29-18 31-4 0-5-3-6-6" stroke="#eda4a6" strokeWidth="3.500" />
    </g>
    <text x="1291" y="1013" fill="#a0dab6" fontSize="30" fontWeight="900" className="font-['Noto_Sans_CJK_SC',sans-serif]">
      野火论坛
    </text>
    <text x="1280" y="1036" fill="#c9e8e4" fontSize="15">www.proewildfire.cn</text>
  </svg>
);

const RedMarks = () => (
  <svg
    viewBox="0 0 1433 1049"
    preserveAspectRatio="xMinYMin slice"
    className="pointer-events-none absolute inset-0 z-20 h-full w-full"
    fill="none"
    stroke="#fb3434"
    strokeWidth="3.500"
    strokeLinecap="round"
    strokeLinejoin="round"
  >
    <path d="M1052 134l-9 1-6-5-7-8-8-10-4-8-5-11-1-16 2-15 4-5 9-4 7-3 13-1 5-3h48l5 3 3 6 5 4 4 8 3 7 1 9-4 10-4 9-5 10-6 5-12 8-12 3-9 3-7 3" />
    <path d="M1052 134l-2 8-11 17-8 11-5 9v9l-6 11-5 8-9 12-2 6-12 16-3 9-8 12-6 14-4 11-7 11-3 9-6 11-1 16v15l-2 12-1 7-3 8-1 12-3 10v16l2 8 3 8 2 6" />
    <path d="M932 421l10 4 8 8 4-7 10-13 8-9" />
    <path d="M712 386l78-1 8-2 25-1 7-2h40l5-1h30l4-1h54l4 2h70l4 2h54l4 2h34l4 2h44l5 2h30l4 2h103l8-2h12l4-2h8" />
    <path d="M1354 348v82M1344 400h3l4-6 4-8 4-4 3-5 4-3v-5" />
    <path d="M708 364l-2 15v14l2 10 1 8 3 10 2 7M726 376h-5l-6 6-2 9-5 6" />
  </svg>
);

const App = () => {
  return (
    <div className="relative flex min-h-screen overflow-hidden bg-[#fcfcfc] font-['Open_Sans','Noto_Sans_CJK_SC',sans-serif]">
      <div className="w-1 shrink-0 bg-linear-to-r from-[#bcbcbc] to-[#f2f2f2]" />
      <div className="flex min-w-0 flex-1 flex-col">
        <TitleBar />
        <TabBar />
        <Ribbon />
        <div className="flex flex-1">
          <ModelTree />
          <main className="relative flex-1">
            <Sketch />
            <ViewToolbar />
          </main>
        </div>
      </div>
      <RedMarks />
    </div>
  );
};

export default App;
